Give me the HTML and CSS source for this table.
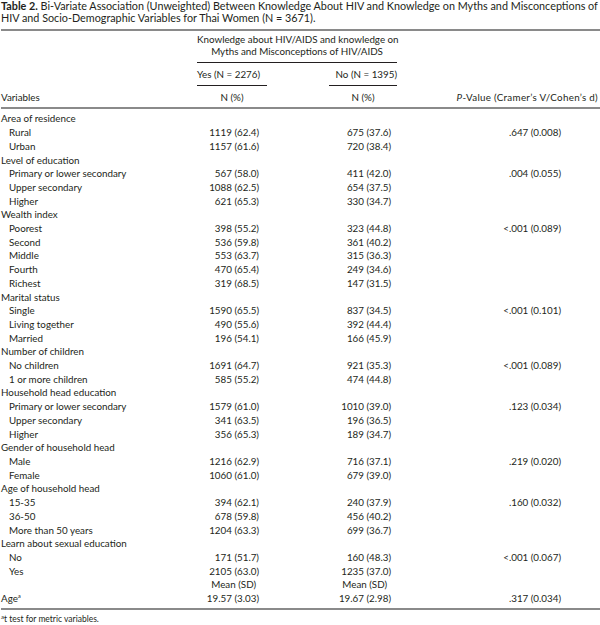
FILE: index.html
```html
<!DOCTYPE html>
<html>
<head>
<meta charset="utf-8">
<link rel="stylesheet" href="styles.css">
</head>
<body>
<div class="page">
  <p class="caption"><b>Table 2.</b> Bi-Variate Association (Unweighted) Between Knowledge About HIV and Knowledge on Myths and Misconceptions of HIV and Socio-Demographic Variables for Thai Women (N = 3671).</p>
  <table class="tbl">
    <colgroup>
      <col class="c-var"><col class="c-yes"><col class="c-gap"><col class="c-no"><col class="c-p">
    </colgroup>
    <thead>
      <tr class="h1">
        <th></th>
        <th colspan="3" class="span">Knowledge about HIV/AIDS and knowledge on<br>Myths and Misconceptions of HIV/AIDS</th>
        <th></th>
      </tr>
      <tr class="h2">
        <th></th>
        <th class="sub">Yes (N = 2276)</th>
        <th></th>
        <th class="sub subr">No (N = 1395)</th>
        <th></th>
      </tr>
      <tr class="h3">
        <th class="lab">Variables</th>
        <th class="ctr">N (%)</th>
        <th></th>
        <th class="ctr">N (%)</th>
        <th class="pv"><i>P</i>-Value (Cramer’s V/Cohen’s d)</th>
      </tr>
    </thead>
    <tbody>
      <tr class="first"><td class="cat">Area of residence</td><td></td><td></td><td></td><td></td></tr>
      <tr><td class="ind">Rural</td><td class="y">1119 (62.4)</td><td></td><td class="n">675 (37.6)</td><td class="p">.647 (0.008)</td></tr>
      <tr><td class="ind">Urban</td><td class="y">1157 (61.6)</td><td></td><td class="n">720 (38.4)</td><td class="p"></td></tr>
      <tr><td class="cat">Level of education</td><td></td><td></td><td></td><td></td></tr>
      <tr><td class="ind">Primary or lower secondary</td><td class="y">567 (58.0)</td><td></td><td class="n">411 (42.0)</td><td class="p">.004 (0.055)</td></tr>
      <tr><td class="ind">Upper secondary</td><td class="y">1088 (62.5)</td><td></td><td class="n">654 (37.5)</td><td class="p"></td></tr>
      <tr><td class="ind">Higher</td><td class="y">621 (65.3)</td><td></td><td class="n">330 (34.7)</td><td class="p"></td></tr>
      <tr><td class="cat">Wealth index</td><td></td><td></td><td></td><td></td></tr>
      <tr><td class="ind">Poorest</td><td class="y">398 (55.2)</td><td></td><td class="n">323 (44.8)</td><td class="p">&lt;.001 (0.089)</td></tr>
      <tr><td class="ind">Second</td><td class="y">536 (59.8)</td><td></td><td class="n">361 (40.2)</td><td class="p"></td></tr>
      <tr><td class="ind">Middle</td><td class="y">553 (63.7)</td><td></td><td class="n">315 (36.3)</td><td class="p"></td></tr>
      <tr><td class="ind">Fourth</td><td class="y">470 (65.4)</td><td></td><td class="n">249 (34.6)</td><td class="p"></td></tr>
      <tr><td class="ind">Richest</td><td class="y">319 (68.5)</td><td></td><td class="n">147 (31.5)</td><td class="p"></td></tr>
      <tr><td class="cat">Marital status</td><td></td><td></td><td></td><td></td></tr>
      <tr><td class="ind">Single</td><td class="y">1590 (65.5)</td><td></td><td class="n">837 (34.5)</td><td class="p">&lt;.001 (0.101)</td></tr>
      <tr><td class="ind">Living together</td><td class="y">490 (55.6)</td><td></td><td class="n">392 (44.4)</td><td class="p"></td></tr>
      <tr><td class="ind">Married</td><td class="y">196 (54.1)</td><td></td><td class="n">166 (45.9)</td><td class="p"></td></tr>
      <tr><td class="cat">Number of children</td><td></td><td></td><td></td><td></td></tr>
      <tr><td class="ind">No children</td><td class="y">1691 (64.7)</td><td></td><td class="n">921 (35.3)</td><td class="p">&lt;.001 (0.089)</td></tr>
      <tr><td class="ind">1 or more children</td><td class="y">585 (55.2)</td><td></td><td class="n">474 (44.8)</td><td class="p"></td></tr>
      <tr><td class="cat">Household head education</td><td></td><td></td><td></td><td></td></tr>
      <tr><td class="ind">Primary or lower secondary</td><td class="y">1579 (61.0)</td><td></td><td class="n">1010 (39.0)</td><td class="p">.123 (0.034)</td></tr>
      <tr><td class="ind">Upper secondary</td><td class="y">341 (63.5)</td><td></td><td class="n">196 (36.5)</td><td class="p"></td></tr>
      <tr><td class="ind">Higher</td><td class="y">356 (65.3)</td><td></td><td class="n">189 (34.7)</td><td class="p"></td></tr>
      <tr><td class="cat">Gender of household head</td><td></td><td></td><td></td><td></td></tr>
      <tr><td class="ind">Male</td><td class="y">1216 (62.9)</td><td></td><td class="n">716 (37.1)</td><td class="p">.219 (0.020)</td></tr>
      <tr><td class="ind">Female</td><td class="y">1060 (61.0)</td><td></td><td class="n">679 (39.0)</td><td class="p"></td></tr>
      <tr><td class="cat">Age of household head</td><td></td><td></td><td></td><td></td></tr>
      <tr><td class="ind">15-35</td><td class="y">394 (62.1)</td><td></td><td class="n">240 (37.9)</td><td class="p">.160 (0.032)</td></tr>
      <tr><td class="ind">36-50</td><td class="y">678 (59.8)</td><td></td><td class="n">456 (40.2)</td><td class="p"></td></tr>
      <tr><td class="ind">More than 50 years</td><td class="y">1204 (63.3)</td><td></td><td class="n">699 (36.7)</td><td class="p"></td></tr>
      <tr><td class="cat">Learn about sexual education</td><td></td><td></td><td></td><td></td></tr>
      <tr><td class="ind">No</td><td class="y">171 (51.7)</td><td></td><td class="n">160 (48.3)</td><td class="p">&lt;.001 (0.067)</td></tr>
      <tr><td class="ind">Yes</td><td class="y">2105 (63.0)</td><td></td><td class="n">1235 (37.0)</td><td class="p"></td></tr>
      <tr><td class="cat"></td><td class="y ms">Mean (SD)</td><td></td><td class="n ms">Mean (SD)</td><td class="p"></td></tr>
      <tr class="last"><td class="cat">Age<sup>a</sup></td><td class="y">19.57 (3.03)</td><td></td><td class="n">19.67 (2.98)</td><td class="p">.317 (0.034)</td></tr>
    </tbody>
  </table>
  <p class="foot"><sup>a</sup>t test for metric variables.</p>
</div>
</body>
</html>
```

FILE: styles.css
```css
html, body {
  margin: 0;
  padding: 0;
  background: #ffffff;
}
body {
  font-family: "Lato", "Liberation Sans", sans-serif;
  color: #231f20;
  font-size: 9.8px;
}
.page {
  width: 600px;
  padding-left: 1px;
  box-sizing: border-box;
}
.caption {
  margin: 0;
  line-height: 12px;
  font-size: 10.8px;
}
.caption b {
  font-weight: 700;
}
.tbl {
  margin-top: 5px;
  width: 599px;
  border-collapse: collapse;
  table-layout: fixed;
  border-top: 2px solid #8a8a8a;
  border-bottom: 2px solid #8a8a8a;
}
.c-var { width: 196px; }
.c-yes { width: 70px; }
.c-gap { width: 62px; }
.c-no { width: 68px; }
.c-p { width: 203px; }
th, td {
  padding: 0;
  font-weight: normal;
  white-space: nowrap;
  vertical-align: middle;
}
thead tr.h1 th {
  line-height: 11.7px;
  padding-top: 3px;
  padding-bottom: 5px;
}
th.span {
  text-align: center;
  border-bottom: 1px solid #231f20;
}
thead tr.h2 th {
  line-height: 12px;
  padding-top: 5px;
  padding-bottom: 5px;
}
th.sub {
  text-align: left;
  border-bottom: 1px solid #231f20;
}
th.subr {
  text-align: right;
}
thead tr.h3 th {
  line-height: 12px;
  padding-top: 5px;
  padding-bottom: 4px;
  border-bottom: 2px solid #8a8a8a;
}
th.lab { text-align: left; }
th.ctr { text-align: center; }
th.pv { text-align: right; padding-right: 2px; letter-spacing: 0.3px; }
tbody td {
  height: 13.7px;
  line-height: 13.7px;
}
tbody tr.first td { padding-top: 3px; }
tbody tr.last td { padding-bottom: 2px; }
td.ind { padding-left: 8px; }
td.y { text-align: right; padding-right: 8px; }
td.n { text-align: right; padding-right: 6px; }
td.p { text-align: right; padding-right: 39px; }
td.ms { padding-right: 11px; }
td.n.ms { padding-right: 10px; }
sup {
  font-size: 6px;
  line-height: 0;
  vertical-align: 4px;
}
.foot {
  margin: 3px 0 0 0;
  font-size: 8.5px;
  line-height: 12px;
}
.foot sup { vertical-align: 3px; }
```
